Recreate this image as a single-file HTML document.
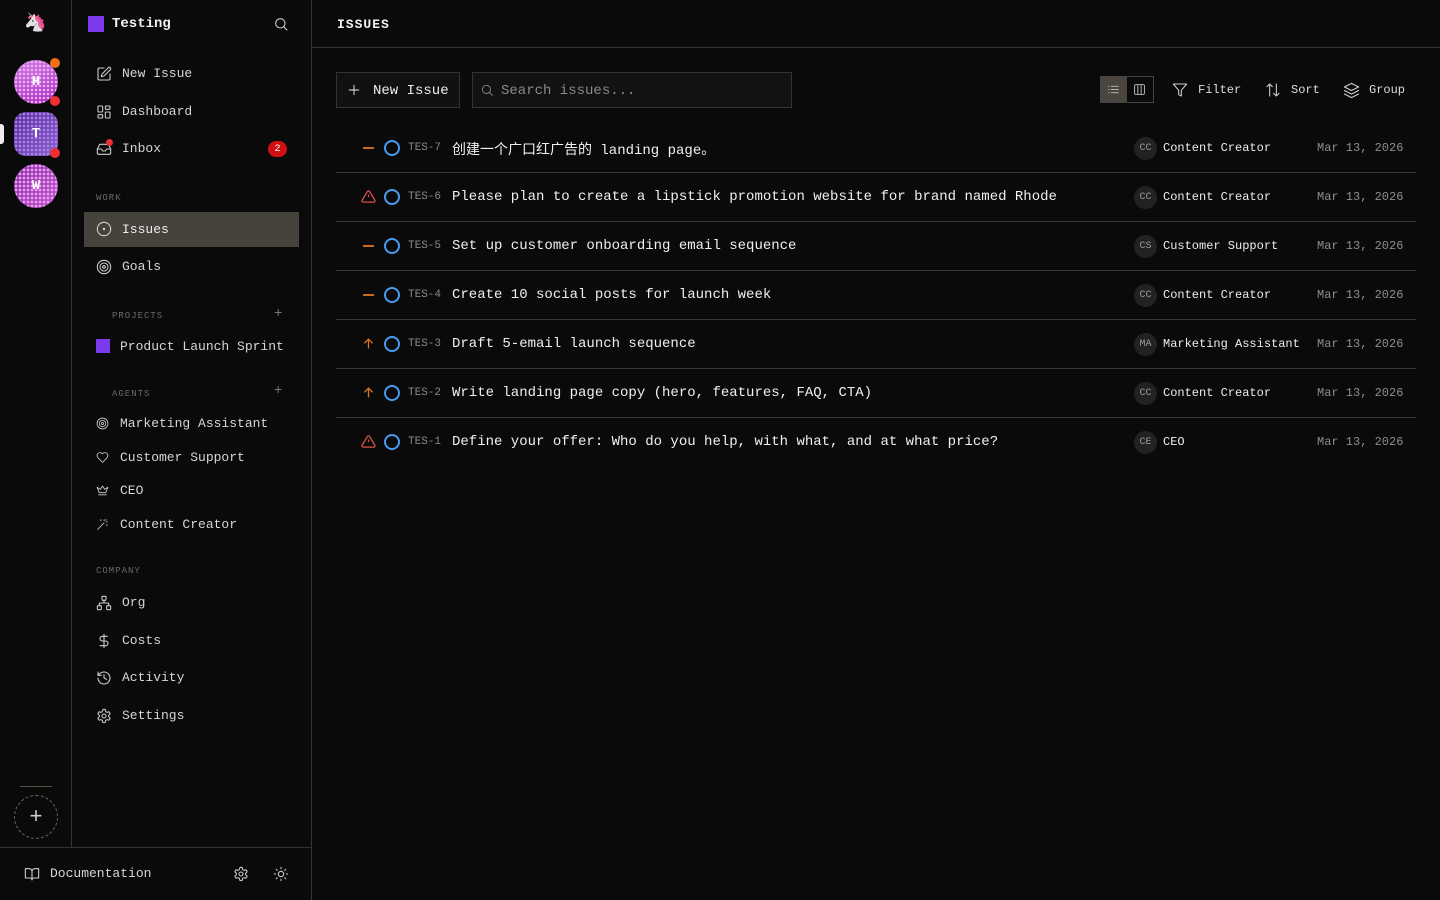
<!DOCTYPE html>
<html><head><meta charset="utf-8"><style>
*{box-sizing:border-box;margin:0;padding:0}
body{width:1440px;height:900px;background:#0a0a0a;color:#e5e5e5;font-family:"Liberation Mono","Noto Sans CJK SC",monospace;position:relative;overflow:hidden}
.abs{position:absolute}
svg{display:block}
.ic{position:absolute;fill:none;stroke:#cfcfcf;stroke-width:1.6;stroke-linecap:round;stroke-linejoin:round}
.nav{position:absolute;left:122px;font-size:13px;color:#d6d6d6}
.sec{position:absolute;font-size:9px;letter-spacing:1px;color:#6a6a6a}
.av{position:absolute;left:14px;width:44px;height:44px;border-radius:50%;color:#fff;font-weight:bold;font-size:14px;display:flex;align-items:center;justify-content:center;font-family:"Liberation Mono",monospace}
.dot{position:absolute;width:10px;height:10px;border-radius:50%}
.row{position:absolute;left:336px;width:1080px;height:49px;border-bottom:1px solid #3a3731}
.row>*{position:absolute}
.st{left:48px;top:16px;width:16px;height:16px;border:2px solid #4a9bf0;border-radius:50%}
.id{left:72px;top:18px;font-size:11px;color:#8a8a8a}
.tt{left:116px;top:16px;font-size:14px;color:#f0f0f0;white-space:nowrap}
.ag{left:798px;top:13px;width:23px;height:23px;border-radius:50%;background:#222;color:#9a9a9a;font-size:10px;display:flex;align-items:center;justify-content:center}
.an{left:827px;top:17px;font-size:12px;color:#eee}
.dt{left:981px;top:17px;font-size:12px;color:#8e8e8e}
.pr{left:26px;top:16px}
</style></head><body>

<!-- rail -->
<div class="abs" style="left:71px;top:0;width:1px;height:847px;background:#333"></div>
<div class="abs" style="left:24px;top:12px;font-size:18px">🦄</div>
<div class="av" style="top:60px;background:radial-gradient(circle,#eab0f0 1.2px,transparent 1.4px) 0 0/4px 4px,linear-gradient(160deg,#d080e8,#a828c0)">H</div>
<div class="dot" style="left:50px;top:58px;background:#f07014"></div>
<div class="dot" style="left:50px;top:96px;background:#f03030"></div>
<div class="abs" style="left:0;top:124px;width:4px;height:20px;background:#eee;border-radius:0 3px 3px 0"></div>
<div class="av" style="top:112px;border-radius:12px;background:radial-gradient(circle,#a985e0 1.2px,transparent 1.4px) 0 0/4px 4px,linear-gradient(135deg,#5a30a0,#8a5cd0)">T</div>
<div class="dot" style="left:50px;top:148px;background:#f03030"></div>
<div class="av" style="top:164px;background:radial-gradient(circle,#e8a0ea 1.3px,transparent 1.5px) 0 0/4px 4px,linear-gradient(135deg,#8a2aa8,#c050d0)">W</div>
<div class="abs" style="left:20px;top:786px;width:32px;height:1px;background:#5a5040"></div>
<div class="abs" style="left:14px;top:795px;width:44px;height:44px;border:1.5px dashed #666;border-radius:50%;color:#ccc;font-size:22px;display:flex;align-items:center;justify-content:center">+</div>

<!-- sidebar -->
<div class="abs" style="left:311px;top:0;width:1px;height:900px;background:#333"></div>
<div class="abs" style="left:0;top:847px;width:311px;height:1px;background:#333"></div>
<div class="abs" style="left:88px;top:16px;width:16px;height:16px;background:#7c3aed"></div>
<div class="abs" style="left:112px;top:16px;font-size:14px;font-weight:bold;color:#f2f2f2">Testing</div>
<svg class="ic" style="left:273px;top:16px" width="16" height="16" viewBox="0 0 24 24"><circle cx="11" cy="11" r="7"/><path d="M21 21l-4.5-4.5"/></svg>

<svg class="ic" style="left:96px;top:66px" width="16" height="16" viewBox="0 0 24 24"><path d="M12 3H5a2 2 0 0 0-2 2v14a2 2 0 0 0 2 2h14a2 2 0 0 0 2-2v-7"/><path d="M18.4 2.6a2 2 0 0 1 3 3L12 15l-4 1 1-4z"/></svg>
<div class="nav" style="top:66px">New Issue</div>
<svg class="ic" style="left:96px;top:104px" width="16" height="16" viewBox="0 0 24 24"><rect x="3" y="3" width="7" height="9" rx="1"/><rect x="14" y="3" width="7" height="5" rx="1"/><rect x="14" y="12" width="7" height="9" rx="1"/><rect x="3" y="16" width="7" height="5" rx="1"/></svg>
<div class="nav" style="top:104px">Dashboard</div>
<svg class="ic" style="left:96px;top:141px" width="16" height="16" viewBox="0 0 24 24"><path d="M22 12h-6l-2 3h-4l-2-3H2"/><path d="M5.5 5h13L22 12v6a2 2 0 0 1-2 2H4a2 2 0 0 1-2-2v-6z"/></svg>
<div class="dot" style="left:106px;top:139px;width:7px;height:7px;background:#f03030"></div>
<div class="nav" style="top:141px">Inbox</div>
<div class="abs" style="left:268px;top:141px;width:19px;height:16px;border-radius:8px;background:#d01010;color:#fff;font-size:10px;display:flex;align-items:center;justify-content:center">2</div>

<div class="sec" style="left:96px;top:193px">WORK</div>
<div class="abs" style="left:84px;top:212px;width:215px;height:35px;background:#46423c"></div>
<svg class="ic" style="left:96px;top:221px" width="16" height="16" viewBox="0 0 24 24"><circle cx="12" cy="12" r="10"/><circle cx="12" cy="12" r="1" fill="#cfcfcf"/></svg>
<div class="nav" style="top:222px;color:#eee">Issues</div>
<svg class="ic" style="left:96px;top:259px" width="16" height="16" viewBox="0 0 24 24"><circle cx="12" cy="12" r="10"/><circle cx="12" cy="12" r="6"/><circle cx="12" cy="12" r="2"/></svg>
<div class="nav" style="top:259px">Goals</div>

<div class="sec" style="left:112px;top:311px">PROJECTS</div>
<div class="abs" style="left:274px;top:306px;color:#777;font-size:14px">+</div>
<div class="abs" style="left:96px;top:339px;width:14px;height:14px;background:#7c3aed"></div>
<div class="nav" style="left:120px;top:339px">Product Launch Sprint</div>

<div class="sec" style="left:112px;top:389px">AGENTS</div>
<div class="abs" style="left:274px;top:383px;color:#777;font-size:14px">+</div>
<svg class="ic" style="left:96px;top:417px;stroke-width:1.5" width="13" height="13" viewBox="0 0 24 24"><circle cx="12" cy="12" r="10"/><circle cx="12" cy="12" r="6"/><circle cx="12" cy="12" r="2"/></svg>
<div class="nav" style="left:120px;top:416px">Marketing Assistant</div>
<svg class="ic" style="left:96px;top:451px" width="13" height="13" viewBox="0 0 24 24"><path d="M19 14c1.5-1.5 3-3.2 3-5.5A5.5 5.5 0 0 0 16.5 3c-1.8 0-3 .5-4.5 2-1.5-1.500-2.7-2-4.5-2A5.5 5.5 0 0 0 2 8.5c0 2.3 1.5 4 3 5.5l7 7z"/></svg>
<div class="nav" style="left:120px;top:450px">Customer Support</div>
<svg class="ic" style="left:96px;top:484px" width="13" height="13" viewBox="0 0 24 24"><path d="M2 6l4 10h12l4-10-6 4-4-6-4 6z"/><path d="M5 20h14"/></svg>
<div class="nav" style="left:120px;top:483px">CEO</div>
<svg class="ic" style="left:96px;top:518px" width="13" height="13" viewBox="0 0 24 24"><path d="M3 21L15 9"/><path d="M15 3v2M19 7h2M19 3l-1 1M9 3v2M21 13h-2"/></svg>
<div class="nav" style="left:120px;top:517px">Content Creator</div>

<div class="sec" style="left:96px;top:566px">COMPANY</div>
<svg class="ic" style="left:96px;top:595px" width="16" height="16" viewBox="0 0 24 24"><rect x="9" y="2" width="6" height="6" rx="1"/><rect x="2" y="16" width="6" height="6" rx="1"/><rect x="16" y="16" width="6" height="6" rx="1"/><path d="M5 16v-3a1 1 0 0 1 1-1h12a1 1 0 0 1 1 1v3M12 12V8"/></svg>
<div class="nav" style="top:595px">Org</div>
<svg class="ic" style="left:96px;top:633px" width="16" height="16" viewBox="0 0 24 24"><path d="M12 2v20M17 5H9.5a3.5 3.5 0 0 0 0 7h5a3.5 3.5 0 0 1 0 7H6"/></svg>
<div class="nav" style="top:633px">Costs</div>
<svg class="ic" style="left:96px;top:670px" width="16" height="16" viewBox="0 0 24 24"><path d="M3 12a9 9 0 1 0 9-9 9.8 9.8 0 0 0-6.7 2.7L3 8"/><path d="M3 3v5h5M12 7v5l4 2"/></svg>
<div class="nav" style="top:670px">Activity</div>
<svg class="ic" style="left:96px;top:708px" width="16" height="16" viewBox="0 0 24 24"><path d="M12.2 2h-.4a2 2 0 0 0-2 2v.2a2 2 0 0 1-1 1.7l-.4.3a2 2 0 0 1-2 0l-.2-.1a2 2 0 0 0-2.7.7l-.2.4a2 2 0 0 0 .7 2.7l.2.1a2 2 0 0 1 1 1.7v.5a2 2 0 0 1-1 1.7l-.2.1a2 2 0 0 0-.7 2.7l.2.4a2 2 0 0 0 2.7.7l.2-.1a2 2 0 0 1 2 0l.4.3a2 2 0 0 1 1 1.7v.2a2 2 0 0 0 2 2h.4a2 2 0 0 0 2-2v-.2a2 2 0 0 1 1-1.7l.4-.3a2 2 0 0 1 2 0l.2.1a2 2 0 0 0 2.7-.7l.2-.4a2 2 0 0 0-.7-2.7l-.2-.1a2 2 0 0 1-1-1.7v-.5a2 2 0 0 1 1-1.7l.2-.1a2 2 0 0 0 .7-2.7l-.2-.4a2 2 0 0 0-2.7-.7l-.2.1a2 2 0 0 1-2 0l-.4-.3a2 2 0 0 1-1-1.7V4a2 2 0 0 0-2-2z"/><circle cx="12" cy="12" r="3"/></svg>
<div class="nav" style="top:708px">Settings</div>

<svg class="ic" style="left:24px;top:866px" width="16" height="16" viewBox="0 0 24 24"><path d="M2 4h6a4 4 0 0 1 4 4v13a3 3 0 0 0-3-3H2zM22 4h-6a4 4 0 0 0-4 4v13a3 3 0 0 1 3-3h7z"/></svg>
<div class="nav" style="left:50px;top:866px">Documentation</div>
<svg class="ic" style="left:233px;top:866px" width="16" height="16" viewBox="0 0 24 24"><path d="M12.2 2h-.4a2 2 0 0 0-2 2v.2a2 2 0 0 1-1 1.7l-.4.3a2 2 0 0 1-2 0l-.2-.1a2 2 0 0 0-2.7.7l-.2.4a2 2 0 0 0 .7 2.7l.2.1a2 2 0 0 1 1 1.7v.5a2 2 0 0 1-1 1.7l-.2.1a2 2 0 0 0-.7 2.7l.2.4a2 2 0 0 0 2.7.7l.2-.1a2 2 0 0 1 2 0l.4.3a2 2 0 0 1 1 1.7v.2a2 2 0 0 0 2 2h.4a2 2 0 0 0 2-2v-.2a2 2 0 0 1 1-1.7l.4-.3a2 2 0 0 1 2 0l.2.1a2 2 0 0 0 2.7-.7l.2-.4a2 2 0 0 0-.7-2.7l-.2-.1a2 2 0 0 1-1-1.7v-.5a2 2 0 0 1 1-1.7l.2-.1a2 2 0 0 0 .7-2.7l-.2-.4a2 2 0 0 0-2.7-.7l-.2.1a2 2 0 0 1-2 0l-.4-.3a2 2 0 0 1-1-1.7V4a2 2 0 0 0-2-2z"/><circle cx="12" cy="12" r="3"/></svg>
<svg class="ic" style="left:273px;top:866px" width="16" height="16" viewBox="0 0 24 24"><circle cx="12" cy="12" r="4"/><path d="M12 2v2M12 20v2M4.9 4.9l1.4 1.4M17.7 17.7l1.4 1.4M2 12h2M20 12h2M6.3 17.7l-1.4 1.4M19.1 4.9l-1.4 1.4"/></svg>

<!-- main header -->
<div class="abs" style="left:337px;top:17px;font-size:13px;font-weight:bold;letter-spacing:1px;color:#f2f2f2">ISSUES</div>
<div class="abs" style="left:312px;top:47px;width:1128px;height:1px;background:#333"></div>

<div class="abs" style="left:336px;top:72px;width:124px;height:36px;border:1px solid #333;background:#111"></div>
<svg class="ic" style="left:347px;top:83px;stroke:#eee" width="14" height="14" viewBox="0 0 24 24"><path d="M12 4v16M4 12h16"/></svg>
<div class="abs" style="left:373px;top:83px;font-size:14px;color:#eee">New Issue</div>
<div class="abs" style="left:472px;top:72px;width:320px;height:36px;border:1px solid #333;background:#121212"></div>
<svg class="ic" style="left:480px;top:83px;stroke:#888" width="14" height="14" viewBox="0 0 24 24"><circle cx="11" cy="11" r="7"/><path d="M21 21l-4.5-4.5"/></svg>
<div class="abs" style="left:501px;top:83px;font-size:14px;color:#8a8a8a">Search issues...</div>

<div class="abs" style="left:1100px;top:76px;width:54px;height:27px;border:1px solid #444"></div>
<div class="abs" style="left:1101px;top:77px;width:26px;height:25px;background:#4a463f"></div>
<svg class="ic" style="left:1107px;top:83px" width="13" height="13" viewBox="0 0 24 24"><path d="M8 6h13M8 12h13M8 18h13M3 6h1M3 12h1M3 18h1"/></svg>
<svg class="ic" style="left:1133px;top:83px" width="13" height="13" viewBox="0 0 24 24"><rect x="3" y="3" width="18" height="18" rx="2"/><path d="M9 3v18M15 3v18"/></svg>
<svg class="ic" style="left:1172px;top:82px" width="16" height="16" viewBox="0 0 24 24"><path d="M22 3H2l8 9.5V19l4 2v-8.5z"/></svg>
<div class="abs" style="left:1198px;top:83px;font-size:12px;color:#ddd">Filter</div>
<svg class="ic" style="left:1265px;top:82px" width="16" height="16" viewBox="0 0 24 24"><path d="M7 21V3M3 7l4-4 4 4M17 3v18M13 17l4 4 4-4"/></svg>
<div class="abs" style="left:1291px;top:83px;font-size:12px;color:#ddd">Sort</div>
<svg class="ic" style="left:1343px;top:82px" width="17" height="17" viewBox="0 0 24 24"><path d="M12 2L2 7l10 5 10-5z"/><path d="M2 12l10 5 10-5M2 17l10 5 10-5"/></svg>
<div class="abs" style="left:1369px;top:83px;font-size:12px;color:#ddd">Group</div>

<!-- rows -->
<div class="row" style="top:124px"><div class="pr" style="left:27px;top:23px;width:11px;height:2px;background:#c96a1c"></div><div class="st"></div><div class="id">TES-7</div><div class="tt" style="top:15px">创建一个广口红广告的 landing page。</div><div class="ag">CC</div><div class="an">Content Creator</div><div class="dt">Mar 13, 2026</div></div>
<div class="row" style="top:173px"><svg class="pr" style="left:25px" width="15" height="15" viewBox="0 0 24 24" fill="none" stroke="#e0504a" stroke-width="2" stroke-linejoin="round"><path d="M10.3 3.9L1.8 18a2 2 0 0 0 1.7 3h17a2 2 0 0 0 1.7-3L13.7 3.9a2 2 0 0 0-3.4 0z"/><path d="M12 9v4M12 17h.01"/></svg><div class="st"></div><div class="id">TES-6</div><div class="tt">Please plan to create a lipstick promotion website for brand named Rhode</div><div class="ag">CC</div><div class="an">Content Creator</div><div class="dt">Mar 13, 2026</div></div>
<div class="row" style="top:222px"><div class="pr" style="left:27px;top:23px;width:11px;height:2px;background:#c96a1c"></div><div class="st"></div><div class="id">TES-5</div><div class="tt">Set up customer onboarding email sequence</div><div class="ag">CS</div><div class="an">Customer Support</div><div class="dt">Mar 13, 2026</div></div>
<div class="row" style="top:271px"><div class="pr" style="left:27px;top:23px;width:11px;height:2px;background:#c96a1c"></div><div class="st"></div><div class="id">TES-4</div><div class="tt">Create 10 social posts for launch week</div><div class="ag">CC</div><div class="an">Content Creator</div><div class="dt">Mar 13, 2026</div></div>
<div class="row" style="top:320px"><svg class="pr" style="left:26px;top:17px" width="13" height="13" viewBox="0 0 24 24" fill="none" stroke="#d9751e" stroke-width="2.4" stroke-linecap="round"><path d="M12 20V4M5 11l7-7 7 7"/></svg><div class="st"></div><div class="id">TES-3</div><div class="tt">Draft 5-email launch sequence</div><div class="ag">MA</div><div class="an">Marketing Assistant</div><div class="dt">Mar 13, 2026</div></div>
<div class="row" style="top:369px"><svg class="pr" style="left:26px;top:17px" width="13" height="13" viewBox="0 0 24 24" fill="none" stroke="#d9751e" stroke-width="2.4" stroke-linecap="round"><path d="M12 20V4M5 11l7-7 7 7"/></svg><div class="st"></div><div class="id">TES-2</div><div class="tt">Write landing page copy (hero, features, FAQ, CTA)</div><div class="ag">CC</div><div class="an">Content Creator</div><div class="dt">Mar 13, 2026</div></div>
<div class="row" style="top:418px;border-bottom:none"><svg class="pr" style="left:25px" width="15" height="15" viewBox="0 0 24 24" fill="none" stroke="#e0504a" stroke-width="2" stroke-linejoin="round"><path d="M10.3 3.9L1.8 18a2 2 0 0 0 1.7 3h17a2 2 0 0 0 1.7-3L13.7 3.9a2 2 0 0 0-3.4 0z"/><path d="M12 9v4M12 17h.01"/></svg><div class="st"></div><div class="id">TES-1</div><div class="tt">Define your offer: Who do you help, with what, and at what price?</div><div class="ag">CE</div><div class="an">CEO</div><div class="dt">Mar 13, 2026</div></div>

</body></html>
